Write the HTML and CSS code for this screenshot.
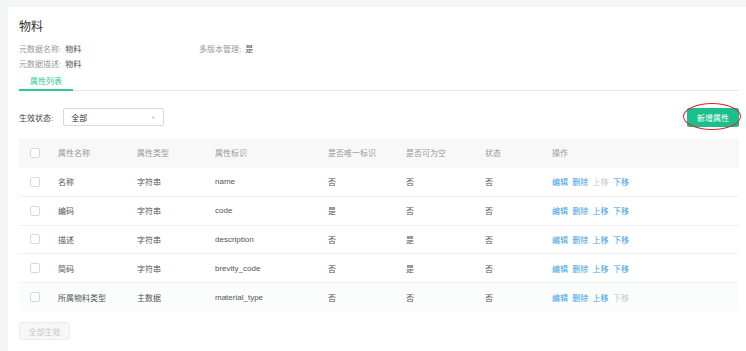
FILE: index.html
```html
<!DOCTYPE html>
<html lang="zh-CN">
<head>
    <meta charset="UTF-8">
    <title>物料 - 元数据</title>
    <link rel="stylesheet" href="styles.css">
</head>
<body>
    <div class="card">
        <h1 class="title">物料</h1>

        <div class="meta">
            <div class="meta-item"><span class="meta-label">元数据名称:</span><span class="meta-value">物料</span></div>
            <div class="meta-item"><span class="meta-label">多版本管理:</span><span class="meta-value">是</span></div>
            <div class="meta-item"><span class="meta-label">元数据描述:</span><span class="meta-value">物料</span></div>
        </div>

        <div class="tabs">
            <div class="tab active">属性列表</div>
        </div>

        <!-- 筛选 -->
        <div class="toolbar">
            <div class="filter">
                <span class="filter-label">生效状态:</span>
                <div class="select">
                    <span>全部</span>
                    <span class="select-arrow">▼</span>
                </div>
            </div>
            <div class="btn-wrap">
                <button class="btn-primary">新增属性</button>
                <span class="mark"></span>
            </div>
        </div>

        <table class="attr-table">
            <colgroup>
                <col style="width:39px">
                <col style="width:79px">
                <col style="width:78px">
                <col style="width:113px">
                <col style="width:78px">
                <col style="width:79px">
                <col style="width:67px">
                <col>
            </colgroup>
            <thead>
                <tr>
                    <th class="check-cell"><span class="checkbox"></span></th>
                    <th>属性名称</th>
                    <th>属性类型</th>
                    <th>属性标识</th>
                    <th>是否唯一标识</th>
                    <th>是否可为空</th>
                    <th>状态</th>
                    <th>操作</th>
                </tr>
            </thead>
            <tbody>
                <tr>
                    <td class="check-cell"><span class="checkbox"></span></td>
                    <td>名称</td>
                    <td>字符串</td>
                    <td>name</td>
                    <td>否</td>
                    <td>否</td>
                    <td>否</td>
                    <td class="actions"><a>编辑</a><a>删除</a><a class="disabled">上移</a><a>下移</a></td>
                </tr>
                <tr>
                    <td class="check-cell"><span class="checkbox"></span></td>
                    <td>编码</td>
                    <td>字符串</td>
                    <td>code</td>
                    <td>是</td>
                    <td>否</td>
                    <td>否</td>
                    <td class="actions"><a>编辑</a><a>删除</a><a>上移</a><a>下移</a></td>
                </tr>
                <tr>
                    <td class="check-cell"><span class="checkbox"></span></td>
                    <td>描述</td>
                    <td>字符串</td>
                    <td>description</td>
                    <td>否</td>
                    <td>是</td>
                    <td>否</td>
                    <td class="actions"><a>编辑</a><a>删除</a><a>上移</a><a>下移</a></td>
                </tr>
                <tr>
                    <td class="check-cell"><span class="checkbox"></span></td>
                    <td>简码</td>
                    <td>字符串</td>
                    <td>brevity_code</td>
                    <td>否</td>
                    <td>是</td>
                    <td>否</td>
                    <td class="actions"><a>编辑</a><a>删除</a><a>上移</a><a>下移</a></td>
                </tr>
                <tr class="hover">
                    <td class="check-cell"><span class="checkbox"></span></td>
                    <td>所属物料类型</td>
                    <td>主数据</td>
                    <td>material_type</td>
                    <td>否</td>
                    <td>否</td>
                    <td>否</td>
                    <td class="actions"><a>编辑</a><a>删除</a><a>上移</a><a class="disabled">下移</a></td>
                </tr>
            </tbody>
        </table>

        <button class="btn-disabled">全部生效</button>
    </div>
</body>
</html>
```

FILE: styles.css
```css
* {
    margin: 0;
    padding: 0;
    box-sizing: border-box;
}

body {
    font-family: "Liberation Sans", "Noto Sans CJK SC", sans-serif;
    font-size: 8px;
    background: #f4f5f7;
    color: #555;
    padding: 7px 0 0 8px;
}

.card {
    background: #fff;
    padding: 12px 7px 20px 11px;
    min-height: 344px;
}

.title {
    font-size: 12px;
    font-weight: 400;
    line-height: 16px;
    color: #333;
    margin-bottom: 6.5px;
}

.meta {
    display: grid;
    grid-template-columns: 180px 1fr;
    line-height: 15px;
}

.meta-label {
    color: #999;
}

.meta-value {
    color: #555;
    margin-left: 4px;
}

.tabs {
    display: flex;
    border-bottom: 1px solid #e8e8e8;
}

.tab {
    padding: 4.5px 11px 1px 11px;
    line-height: 12px;
    color: #999;
    border-bottom: 2px solid transparent;
    margin-bottom: -1px;
}

.tab.active {
    color: #2dc996;
    border-bottom-color: #2dc996;
}

.toolbar {
    display: flex;
    justify-content: space-between;
    align-items: flex-start;
    margin-top: 17px;
}

.filter {
    display: flex;
    align-items: center;
    height: 18px;
}

.filter-label {
    color: #444;
    margin-right: 10px;
}

.select {
    width: 101px;
    height: 18px;
    border: 1px solid #d9d9d9;
    border-radius: 2px;
    display: flex;
    align-items: center;
    justify-content: space-between;
    padding: 0 8px 0 7px;
    color: #333;
}

.select-arrow {
    font-size: 4px;
    color: #aaa;
}

.btn-wrap {
    position: relative;
}

.btn-primary {
    display: block;
    font-family: inherit;
    font-size: 8px;
    height: 19px;
    width: 52px;
    border: none;
    border-radius: 2px;
    background: #1cbf8b;
    color: #fff;
}

.mark {
    position: absolute;
    left: -4px;
    top: -5px;
    width: 58px;
    height: 27px;
    border: 1px solid #e0262b;
    border-radius: 50%;
}

.attr-table {
    width: 100%;
    border-collapse: collapse;
    table-layout: fixed;
    margin-top: 11px;
}

.attr-table th {
    background: #f8f8f9;
    color: #999;
    font-weight: 400;
    text-align: left;
    height: 29.5px;
}

.attr-table td {
    height: 28.75px;
    border-bottom: 1px solid #f0f1f3;
    color: #555;
}

.attr-table tr.hover td {
    background: #fafdfc;
    border-bottom: none;
}

.check-cell {
    padding-left: 11px;
}

.checkbox {
    display: block;
    width: 10px;
    height: 10px;
    border: 1px solid #d9d9d9;
    border-radius: 2px;
    background: #fff;
}

.actions a {
    color: #3c9de2;
    margin-right: 4.3px;
}

.actions a.disabled {
    color: #c8c8c8;
}

.btn-disabled {
    display: block;
    margin-top: 11px;
    width: 51px;
    height: 18px;
    font-family: inherit;
    font-size: 8px;
    color: #c8c8c8;
    background: #f7f7f7;
    border: 1px solid #ededed;
    border-radius: 2px;
}
```
